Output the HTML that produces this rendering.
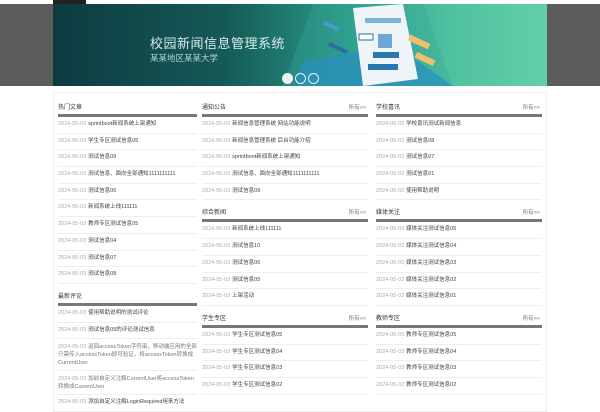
<!DOCTYPE html>
<html><head><meta charset="utf-8"><style>
*{margin:0;padding:0;box-sizing:border-box}
body{width:600px;height:400px;overflow:hidden;background:#fff;font-family:"Liberation Sans","Noto Sans CJK SC",sans-serif;position:relative}
.topbar{position:absolute;left:0;top:0;width:600px;height:4px;background:#fff}
.topblk{position:absolute;left:53px;top:0;width:33px;height:4px;background:#222}
.gray{position:absolute;left:0;top:4px;width:600px;height:82px;background:#5c5c5c}
.banner{position:absolute;left:53px;top:4px;width:494px;height:82px;background:linear-gradient(90deg,#0d3a40 0%,#155a58 35%,#2a9a88 60%,#4fc0a0 80%,#62cfa8 100%);overflow:hidden}
.t1{position:absolute;left:97px;top:29px;color:#d8ece8;font-size:13px;letter-spacing:0.5px}
.t2{position:absolute;left:97px;top:48px;color:#b5d5d0;font-size:8.5px}
.dot{position:absolute;top:69px;width:11px;height:11px;border-radius:50%;border:1.3px solid #e8f4f2}
.box{position:absolute;left:53px;top:92px;width:494px;height:320px;border:1px solid #eee;background:#fff}
.sec{position:absolute}
.h{font-size:6px;color:#333;height:10px;line-height:10px;position:relative}
.h span{position:absolute;right:2px;top:0;color:#777;font-size:5.5px}
.bar{height:3px;background:#777;margin-top:1px}
.r{font-size:5.5px;color:#444;height:16.7px;line-height:15px;border-bottom:1px solid #eee;white-space:nowrap;overflow:hidden}
.r i{font-style:normal;color:#aaa;margin-right:2px}
.r2{height:auto;line-height:8px;padding:4px 0 3px;white-space:normal;color:#777}
</style></head><body>
<div class="topbar"></div><div class="topblk"></div>
<div class="gray"></div>
<div class="banner">
<svg width="494" height="82" style="position:absolute;left:0;top:0">
<polygon points="260,0 370,0 400,82 230,82" fill="#3aa89a" opacity="0.35"/>
<polygon points="250,58 340,40 400,82 240,82" fill="#2a8ec0" opacity="0.7"/>
<polygon points="300,4 350,0 365,75 310,82" fill="#eef4f8"/>
<rect x="312" y="14" width="36" height="5" fill="#7fb4d8"/>
<rect x="306" y="30" width="14" height="6" fill="#fff" stroke="#2a6fa0"/>
<rect x="325" y="30" width="14" height="14" fill="#6fa8d8"/>
<rect x="320" y="48" width="26" height="6" fill="#2a78b0"/>
<rect x="315" y="60" width="30" height="6" fill="#2a78b0"/>
<rect x="270" y="20" width="16" height="4" fill="#4a9ad0" transform="rotate(25 278 22)"/>
<rect x="275" y="42" width="20" height="4" fill="#2a6fa0" transform="rotate(25 285 44)"/>
<rect x="355" y="35" width="22" height="6" fill="#f0c070" transform="rotate(25 366 38)"/>
<rect x="362" y="52" width="20" height="6" fill="#f0c070" transform="rotate(25 372 55)"/>
</svg>
<div class="t1">校园新闻信息管理系统</div>
<div class="t2">某某地区某某大学</div>
<div class="dot" style="left:229px;background:#e8f4f2"></div>
<div class="dot" style="left:242px"></div>
<div class="dot" style="left:255px"></div>
</div>
<div class="box"></div>

<div class="sec" style="left:58px;top:103px;width:139px">
<div class="h">热门文章</div><div class="bar"></div>
<div class="r"><i>2024-05-03</i>sprintboot新闻系统上架通知</div>
<div class="r"><i>2024-05-03</i>学生专区测试信息05</div>
<div class="r"><i>2024-05-03</i>测试信息09</div>
<div class="r"><i>2024-05-03</i>测试信息、面向全部通知1111111111</div>
<div class="r"><i>2024-05-03</i>测试信息06</div>
<div class="r"><i>2024-05-03</i>新闻系统上线111111</div>
<div class="r"><i>2024-05-03</i>教师专区测试信息05</div>
<div class="r"><i>2024-05-03</i>测试信息04</div>
<div class="r"><i>2024-05-03</i>测试信息07</div>
<div class="r"><i>2024-05-03</i>测试信息08</div>
<div class="h" style="margin-top:8px">最新评论</div><div class="bar"></div>
<div class="r"><i>2024-05-03</i>使用帮助说明的测试评论</div>
<div class="r"><i>2024-05-03</i>测试信息05的评论测试信息</div>
<div class="r r2"><i>2024-05-03</i>返回accessToken字符串，移动端应用的全部只需传入accessToken即可验证，将accessToken转换成CurrentUser</div>
<div class="r r2"><i>2024-05-03</i>加前自定义注解CurrentUser将accessToken转换成CurrentUser</div>
<div class="r"><i>2024-05-03</i>添加自定义注解LoginRequired用来方法</div>
</div>

<div class="sec" style="left:202px;top:103px;width:166px">
<div class="h">通知公告<span>所有&gt;&gt;</span></div><div class="bar"></div>
<div class="r"><i>2024-05-03</i>新闻信息管理系统 网站功能说明</div>
<div class="r"><i>2024-05-03</i>新闻信息管理系统 后台功能介绍</div>
<div class="r"><i>2024-05-03</i>sprintboot新闻系统上架通知</div>
<div class="r"><i>2024-05-03</i>测试信息、面向全部通知1111111111</div>
<div class="r"><i>2024-05-03</i>测试信息09</div>
<div class="h" style="margin-top:8px">综合新闻<span>所有&gt;&gt;</span></div><div class="bar"></div>
<div class="r"><i>2024-05-03</i>新闻系统上线111111</div>
<div class="r"><i>2024-05-03</i>测试信息10</div>
<div class="r"><i>2024-05-03</i>测试信息06</div>
<div class="r"><i>2024-05-03</i>测试信息05</div>
<div class="r"><i>2024-05-03</i>上架活动</div>
<div class="h" style="margin-top:8px">学生专区<span>所有&gt;&gt;</span></div><div class="bar"></div>
<div class="r"><i>2024-05-03</i>学生专区测试信息05</div>
<div class="r"><i>2024-05-03</i>学生专区测试信息04</div>
<div class="r"><i>2024-05-03</i>学生专区测试信息03</div>
<div class="r"><i>2024-05-03</i>学生专区测试信息02</div>
</div>

<div class="sec" style="left:376px;top:103px;width:166px">
<div class="h">学校喜讯<span>所有&gt;&gt;</span></div><div class="bar"></div>
<div class="r"><i>2024-05-03</i>学校喜讯测试新闻信息</div>
<div class="r"><i>2024-05-03</i>测试信息08</div>
<div class="r"><i>2024-05-03</i>测试信息07</div>
<div class="r"><i>2024-05-03</i>测试信息01</div>
<div class="r"><i>2024-05-03</i>使用帮助说明</div>
<div class="h" style="margin-top:8px">媒体关注<span>所有&gt;&gt;</span></div><div class="bar"></div>
<div class="r"><i>2024-05-03</i>媒体关注测试信息05</div>
<div class="r"><i>2024-05-03</i>媒体关注测试信息04</div>
<div class="r"><i>2024-05-03</i>媒体关注测试信息03</div>
<div class="r"><i>2024-05-03</i>媒体关注测试信息02</div>
<div class="r"><i>2024-05-03</i>媒体关注测试信息01</div>
<div class="h" style="margin-top:8px">教师专区<span>所有&gt;&gt;</span></div><div class="bar"></div>
<div class="r"><i>2024-05-03</i>教师专区测试信息05</div>
<div class="r"><i>2024-05-03</i>教师专区测试信息04</div>
<div class="r"><i>2024-05-03</i>教师专区测试信息03</div>
<div class="r"><i>2024-05-03</i>教师专区测试信息02</div>
</div>
</body></html>
